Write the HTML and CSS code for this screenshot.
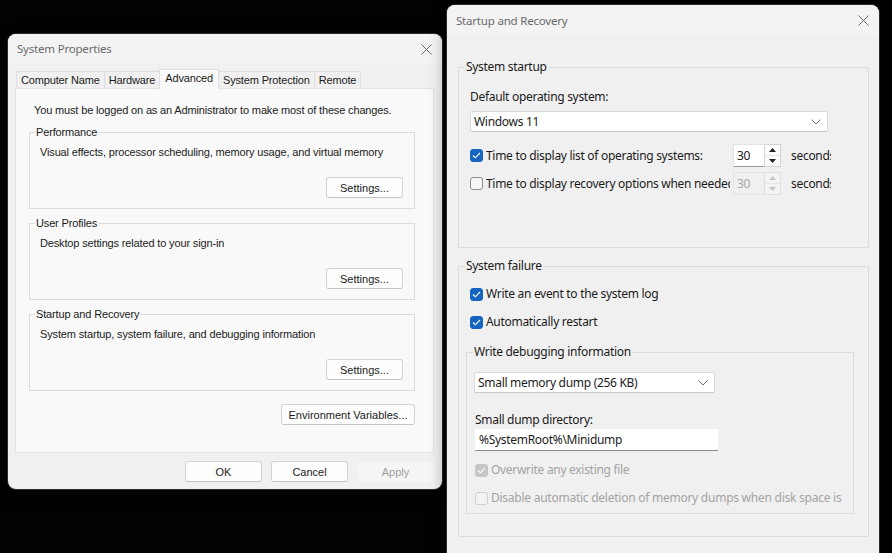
FILE: index.html
```html
<!DOCTYPE html>
<html>
<head>
<meta charset="utf-8">
<link rel="stylesheet" href="styles.css">
</head>
<body>
<div class="desk">
  <div class="win sysprop">
    <div class="titlebar">
      <span class="title">System Properties</span>
      <svg class="close" width="11" height="11" viewBox="0 0 11 11"><path d="M0.5 0.5L10.5 10.5M10.5 0.5L0.5 10.5" stroke="#6b6b6b" stroke-width="1" fill="none"/></svg>
    </div>
    <div class="tabs">
      <div class="tab">Computer Name</div>
      <div class="tab">Hardware</div>
      <div class="tab active">Advanced</div>
      <div class="tab">System Protection</div>
      <div class="tab">Remote</div>
    </div>
    <div class="panel">
      <p class="notice">You must be logged on as an Administrator to make most of these changes.</p>
      <fieldset class="lgroup">
        <legend>Performance</legend>
        <p class="desc">Visual effects, processor scheduling, memory usage, and virtual memory</p>
        <div class="btnrow"><button class="btn">Settings...</button></div>
      </fieldset>
      <fieldset class="lgroup">
        <legend>User Profiles</legend>
        <p class="desc">Desktop settings related to your sign-in</p>
        <div class="btnrow"><button class="btn">Settings...</button></div>
      </fieldset>
      <fieldset class="lgroup">
        <legend>Startup and Recovery</legend>
        <p class="desc">System startup, system failure, and debugging information</p>
        <div class="btnrow"><button class="btn">Settings...</button></div>
      </fieldset>
      <div class="envrow"><button class="btn env">Environment Variables...</button></div>
    </div>
    <div class="footer">
      <button class="btn">OK</button>
      <button class="btn">Cancel</button>
      <button class="btn disabled">Apply</button>
    </div>
  </div>

  <div class="win startup">
    <div class="titlebar">
      <span class="title">Startup and Recovery</span>
      <svg class="close" width="11" height="11" viewBox="0 0 11 11"><path d="M0.5 0.5L10.5 10.5M10.5 0.5L0.5 10.5" stroke="#6b6b6b" stroke-width="1" fill="none"/></svg>
    </div>
    <div class="rbody">
      <fieldset class="rgroup g-startup">
        <legend>System startup</legend>
        <div class="label">Default operating system:</div>
        <div class="select wide"><span>Windows 11</span><svg class="chev" width="10" height="6" viewBox="0 0 10 6"><path d="M0.5 0.5L5 5L9.5 0.5" stroke="#707070" fill="none"/></svg></div>
        <div class="crow first">
          <span class="cb checked"><svg width="9" height="7" viewBox="0 0 9 7"><path d="M1 3.5L3.3 5.8L8 1" stroke="#fff" stroke-width="1.1" fill="none"/></svg></span>
          <span class="ctext clip">Time to display list of operating systems:</span>
          <span class="spin"><span class="val">30</span><span class="arrows"><span class="ar"><svg width="7" height="4" viewBox="0 0 7 4"><path d="M0 4L3.5 0L7 4Z" fill="#222"/></svg></span><span class="ar"><svg width="7" height="4" viewBox="0 0 7 4"><path d="M0 0L3.5 4L7 0Z" fill="#222"/></svg></span></span></span>
          <span class="secs">seconds</span>
        </div>
        <div class="crow">
          <span class="cb"></span>
          <span class="ctext clip">Time to display recovery options when needed:</span>
          <span class="spin dis"><span class="val">30</span><span class="arrows"><span class="ar"><svg width="7" height="4" viewBox="0 0 7 4"><path d="M0 4L3.5 0L7 4Z" fill="#c4c4c4"/></svg></span><span class="ar"><svg width="7" height="4" viewBox="0 0 7 4"><path d="M0 0L3.5 4L7 0Z" fill="#c4c4c4"/></svg></span></span></span>
          <span class="secs">seconds</span>
        </div>
      </fieldset>
      <fieldset class="rgroup g-failure">
        <legend>System failure</legend>
        <div class="crow plain first">
          <span class="cb checked"><svg width="9" height="7" viewBox="0 0 9 7"><path d="M1 3.5L3.3 5.8L8 1" stroke="#fff" stroke-width="1.1" fill="none"/></svg></span>
          <span class="ctext">Write an event to the system log</span>
        </div>
        <div class="crow plain">
          <span class="cb checked"><svg width="9" height="7" viewBox="0 0 9 7"><path d="M1 3.5L3.3 5.8L8 1" stroke="#fff" stroke-width="1.1" fill="none"/></svg></span>
          <span class="ctext">Automatically restart</span>
        </div>
        <fieldset class="rgroup inner">
          <legend>Write debugging information</legend>
          <div class="select narrow"><span>Small memory dump (256 KB)</span><svg class="chev" width="10" height="6" viewBox="0 0 10 6"><path d="M0.5 0.5L5 5L9.5 0.5" stroke="#707070" fill="none"/></svg></div>
          <div class="label dir">Small dump directory:</div>
          <div class="textbox">%SystemRoot%\Minidump</div>
          <div class="crow plain dimrow first">
            <span class="cb checked dis"><svg width="9" height="7" viewBox="0 0 9 7"><path d="M1 3.5L3.3 5.8L8 1" stroke="#fff" stroke-width="1.1" fill="none"/></svg></span>
            <span class="ctext">Overwrite any existing file</span>
          </div>
          <div class="crow plain dimrow">
            <span class="cb dis"></span>
            <span class="ctext clip2">Disable automatic deletion of memory dumps when disk space is low</span>
          </div>
        </fieldset>
      </fieldset>
    </div>
  </div>
</div>
</body>
</html>
```
FILE: styles.css
```css
* { box-sizing: border-box; }
html, body { margin: 0; padding: 0; }
body { background: #000; width: 892px; height: 553px; overflow: hidden; }
.desk { position: relative; width: 892px; height: 553px; background: #020202; }

.win {
  position: absolute;
  background: #f0f0f0;
  border-radius: 8px;
  box-shadow: 0 0 0 1px #2b2b2b, 0 4px 16px rgba(0,0,0,0.5);
  overflow: hidden;
  color: #1b1b1b;
}
.sysprop { left: 8px; top: 34px; width: 434px; height: 455px; font-family: "Liberation Sans", Arial, sans-serif; font-size: 11px; letter-spacing: -0.15px; }
.startup { left: 447px; top: 5px; width: 432px; height: 570px; font-family: "Noto Sans", "Open Sans", sans-serif; font-size: 12px; letter-spacing: -0.3px; }

.titlebar {
  height: 30px;
  display: flex;
  align-items: center;
  justify-content: space-between;
  padding: 0 10px 0 9px;
  background: #f3f3f3;
}
.title { font-family: "Noto Sans", sans-serif; font-size: 11.5px; color: #6a6a6a; letter-spacing: -0.2px; }
.sysprop .title { position: relative; top: -1px; }

/* tabs */
.tabs { display: flex; margin: 6px 0 0 8px; height: 18px; align-items: flex-end; position: relative; z-index: 1; }
.tab {
  height: 17px;
  padding: 0 4px;
  line-height: 17px;
  background: #f0f0f0;
  border: 1px solid #dedede;
  border-bottom: none;
  margin-right: -1px;
  white-space: nowrap;
}
.tab.active { height: 20px; line-height: 17px; background: #f9f9f9; margin-bottom: -1px; padding: 0 5px; }

.panel {
  margin: 0 8px 0 7px;
  height: 365px;
  background: #f9f9f9;
  border: 1px solid #e3e3e3;
  padding: 14px 18px 0 13px;
}
.notice { margin: 0 0 8px 5px; line-height: 14px; }
.lgroup {
  margin: 0 0 7px 0;
  padding: 0 11px 10px 10px;
  border: 1px solid #dcdcdc;
  height: 84px;
  min-inline-size: auto;
}
.lgroup legend { padding: 0 1px; margin-left: -5px; line-height: 14px; }
.desc { margin: 6px 0 0 0; line-height: 14px; }
.btnrow { display: flex; justify-content: flex-end; margin-top: 18px; }

.btn {
  font: inherit;
  color: #1b1b1b;
  background: #fdfdfd;
  border: 1px solid #d3d3d3;
  border-bottom-color: #c4c4c4;
  border-radius: 3px;
  height: 21px;
  width: 77px;
  padding: 0;
}
.envrow { display: flex; justify-content: flex-end; margin-top: 13px; }
.btn.env { width: 134px; }
.footer { display: flex; justify-content: flex-end; gap: 9px; padding: 8px 8px 0 0; }
.btn.disabled { color: #a0a0a0; background: #f5f5f5; border-color: #f2f2f2; }

/* right window */
.rbody { padding: 24px 10px 0 11px; }
.rgroup {
  border: 1px solid #dcdcdc;
  margin: 0;
  padding: 0 0 0 11px;
  min-inline-size: auto;
}
.rgroup legend { padding: 0 1px; margin-left: -5px; line-height: 16px; }
.g-startup { height: 189px; padding-top: 14px; }
.g-failure { height: 279px; margin-top: 10px; padding-top: 1px; padding-right: 15px; padding-left: 11px; }
.label { line-height: 16px; }
.select {
  background: #fff;
  border: 1px solid #d9d9d9;
  border-bottom-color: #c8c8c8;
  border-radius: 2px;
  height: 21px;
  display: flex;
  align-items: center;
  justify-content: space-between;
  padding: 0 6px 0 3px;
}
.select.wide { width: 358px; margin-top: 6px; }
.select.narrow { width: 241px; margin-top: 12px; margin-left: -1px; }

.crow { display: flex; align-items: center; height: 23px; }
.crow.first { margin-top: 12px; }
.g-startup .crow + .crow { margin-top: 5px; }
.crow.plain { height: 16px; }
.g-failure > .crow.first { margin-top: 11px; }
.g-failure > .crow + .crow { margin-top: 12px; }
.cb {
  width: 13px; height: 13px;
  border: 1px solid #8d8d8d;
  border-radius: 3px;
  background: #f7f7f7;
  display: inline-flex;
  align-items: center;
  justify-content: center;
  flex: none;
  margin-right: 3px;
}
.cb.checked { background: #1565c0; border-color: #1565c0; }
.cb.checked.dis { background: #c6c6c6; border-color: #c6c6c6; }
.cb.dis { border-color: #cfcfcf; background: #f3f3f3; }
.ctext { white-space: nowrap; line-height: 16px; }
.clip { width: 244px; margin-right: 3px; overflow: hidden; flex: none; }
.clip2 { width: 351px; overflow: hidden; flex: none; letter-spacing: -0.25px; }
.dimrow .ctext { color: #a3a3a3; }

.spin { display: flex; height: 23px; flex: none; }
.spin .val {
  width: 31px; background: #fff;
  border: 1px solid #e3e3e3; border-right: none;
  padding-left: 3px; line-height: 21px;
  border-bottom: 1px solid #9a9a9a;
}
.spin .arrows { width: 17px; display: flex; flex-direction: column; border: 1px solid #d4d4d4; }
.spin .ar { flex: 1; display: flex; align-items: center; justify-content: center; background: #fbfbfb; }
.spin .ar + .ar { border-top: 1px solid #e6e6e6; }
.spin.dis .val { background: #f0f0f0; color: #a8a8a8; border-bottom-color: #e3e3e3; }
.spin.dis .arrows { border-color: #dedede; }
.spin.dis .ar { background: #f3f3f3; }
.secs { margin-left: 10px; white-space: nowrap; width: 40px; overflow: hidden; }

.inner { margin: 14px 0 0 -4px; height: 170px; width: 388px; padding: 0 0 0 8px; }
.inner legend { margin-left: -2px; }
.label.dir { margin-top: 19px; }
.textbox {
  width: 243px; height: 22px; background: #fff;
  border-bottom: 1px solid #8a8a8a;
  line-height: 21px; padding-left: 4px;
  margin-top: 1px;
}
.inner .crow.first { margin-top: 11px; }
.inner .crow + .crow { margin-top: 12px; }
```
